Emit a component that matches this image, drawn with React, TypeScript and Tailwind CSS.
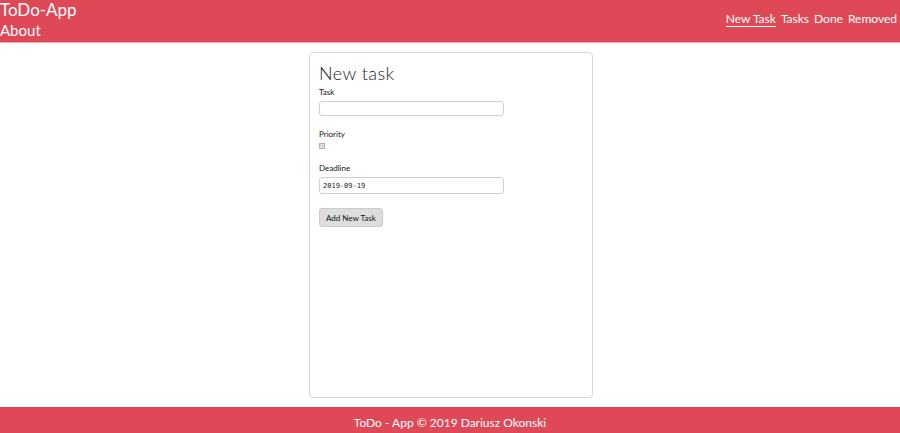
import { useState } from "react";

const links = ["New Task", "Tasks", "Done", "Removed"];

export default function App() {
  const [task, setTask] = useState("");
  const [priority, setPriority] = useState(false);
  const [deadline, setDeadline] = useState("2019-09-19");

  return (
    <div className="flex min-h-screen flex-col bg-white font-['Lato',sans-serif] text-[#222222]">
      <header className="flex items-start justify-between border-b border-[#f0a3ab] bg-[#df4957] text-white">
        <div className="flex flex-col items-start pb-0.5">
          <a href="#home" className="text-[17px] leading-5">ToDo-App</a>
          <a href="#about" className="text-[15px] leading-5">About</a>
        </div>
        <nav className="flex gap-[5px] pt-3 pr-[3px] text-xs leading-[14px]">
          {links.map((link, index) => (
            <a
              key={link}
              href="#tasks"
              className={index === 0 ? "border-b border-white" : "border-b border-transparent"}
            >
              {link}
            </a>
          ))}
        </nav>
      </header>

      <main className="flex flex-1 justify-center py-[9px] pl-0.5">
        <form
          className="flex w-full max-w-[284px] flex-col items-start rounded border border-[#d8d8d8] px-[9px] pt-2"
          onSubmit={(event) => event.preventDefault()}
        >
          <h1 className="text-lg leading-6 font-light tracking-wide">New task</h1>
          <label htmlFor="task" className="mt-px text-[8px] leading-3 text-[#111111]">Task</label>
          <input
            id="task"
            type="text"
            value={task}
            onChange={(event) => setTask(event.target.value)}
            className="mt-[3px] h-[15px] w-[185px] max-w-full rounded-[3px] border border-[#d1d1d1] px-[3px] text-[8px]"
          />
          <label htmlFor="priority" className="mt-3 text-[8px] leading-3 text-[#111111]">Priority</label>
          <input
            id="priority"
            type="checkbox"
            checked={priority}
            onChange={(event) => setPriority(event.target.checked)}
            className="mt-[3px] size-[6px] appearance-none border border-[#b0b0b0] bg-[#dddddd] checked:bg-[#555555]"
          />
          <label htmlFor="deadline" className="mt-[13px] text-[8px] leading-3 text-[#111111]">Deadline</label>
          <input
            id="deadline"
            type="text"
            value={deadline}
            onChange={(event) => setDeadline(event.target.value)}
            className="mt-[3px] h-[17px] w-[185px] max-w-full rounded-[3px] border border-[#d1d1d1] px-[3px] font-['DejaVu_Sans_Mono',monospace] text-[7px]"
          />
          <button
            type="submit"
            className="mt-[14px] h-[19px] rounded-[3px] border border-[#cccccc] bg-[#dddddd] px-1.5 text-[8px] leading-3 text-[#111111]"
          >
            Add New Task
          </button>
        </form>
      </main>

      <footer className="bg-[#df4957] pt-2 pb-0.5 text-center text-xs leading-4 text-white">
        ToDo - App © 2019 Dariusz Okonski
      </footer>
    </div>
  );
}
